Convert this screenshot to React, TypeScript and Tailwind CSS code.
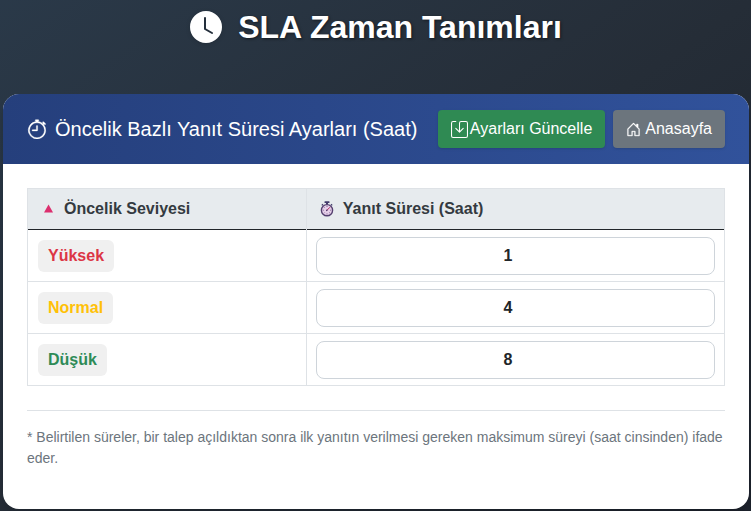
import { BsClockFill, BsHouseDoor, BsSave, BsStopwatch } from 'react-icons/bs'

type Level = { id: string; label: string; hours: number; color: string }

const levels: Level[] = [
  { id: 'high', label: 'Yüksek', hours: 1, color: 'text-[#dc3545]' },
  { id: 'normal', label: 'Normal', hours: 4, color: 'text-[#ffc107]' },
  { id: 'low', label: 'Düşük', hours: 8, color: 'text-[#2e8b57]' },
]

function StopwatchEmoji() {
  return (
    <svg viewBox="0 0 16 16" className="size-4" aria-hidden="true">
      <rect x="5.5" y="0.3" width="5" height="1.8" rx="0.5" fill="#433b6b" />
      <rect x="7" y="1.5" width="2" height="2.5" fill="#433b6b" />
      <path d="M12 3.2l1.2 1.2M4 3.2L2.8 4.4" stroke="#433b6b" strokeWidth="1.3" />
      <circle cx="8" cy="9.2" r="5.6" fill="#e6cfe9" stroke="#54406f" strokeWidth="1.4" />
      <path d="M8 5v1M8 12.4v1M3.8 9.2h1M11.2 9.2h1M5 6.2l.7.7M5 12.2l.7-.7M11 12.2l-.7-.7" stroke="#6b4c83" strokeWidth="0.8" />
      <path d="M7.4 9.8L11 6.2" stroke="#b0285f" strokeWidth="1" />
      <circle cx="7.8" cy="9.4" r="0.8" fill="#54406f" />
    </svg>
  )
}

export default function App() {
  return (
    <main className="min-h-screen bg-linear-to-br from-[#2c3e50] from-[-20%] via-[#252d37] via-50% to-[#1c222c] pt-2 pr-0.5 pb-0.5 pl-[3px] font-['Liberation_Sans',Arial,sans-serif] text-[#212529]">
      <h1 className="mb-12 flex items-center justify-center gap-4 text-[32px]/[38px] font-bold text-white [text-shadow:1px_1px_3px_rgba(0,0,0,0.5)]">
        <BsClockFill className="size-8 drop-shadow-sm" />
        SLA Zaman Tanımları
      </h1>

      <section className="overflow-hidden rounded-2xl bg-white shadow-lg">
        <header className="flex items-center justify-between gap-4 bg-linear-to-r from-[#253f7c] to-[#31529b] px-6 py-4 text-white">
          <h2 className="flex items-center gap-2 text-xl/6">
            <BsStopwatch className="size-5" strokeWidth={0.3} />
            Öncelik Bazlı Yanıt Süresi Ayarları (Saat)
          </h2>
          <div className="flex shrink-0 gap-2">
            <button type="button" className="flex items-center gap-0.5 rounded bg-[#2f8a53] px-[13px] py-[7px] text-base/6 shadow">
              <BsSave className="size-[17px]" />
              Ayarları Güncelle
            </button>
            <a href="#" className="flex items-center gap-1 rounded bg-[#6c757d] px-[13px] py-[7px] text-base/6 shadow">
              <BsHouseDoor className="size-[15px]" strokeWidth={0.3} />
              Anasayfa
            </a>
          </div>
        </header>

        <div className="p-6 pb-10">
          <table className="w-full border-collapse text-left">
            <thead>
              <tr className="border-b border-[#212529] bg-[#e7ebee] text-[#343a40]">
                <th className="w-2/5 border-x border-t border-x-[#dee2e6] border-t-[#dee2e6] px-3 py-2">
                  <span className="flex items-center gap-2">
                    <svg viewBox="0 0 16 16" className="size-4 shrink-0" aria-hidden="true">
                      <path d="M8.5 3.5L13 11.5H4z" fill="#dc2f6e" />
                    </svg>
                    Öncelik Seviyesi
                  </span>
                </th>
                <th className="border-x border-t border-x-[#dee2e6] border-t-[#dee2e6] px-3 py-2">
                  <span className="flex items-center gap-2">
                    <StopwatchEmoji />
                    Yanıt Süresi (Saat)
                  </span>
                </th>
              </tr>
            </thead>
            <tbody>
              {levels.map(({ id, label, hours, color }) => (
                <tr key={id} className="border-b border-[#dee2e6]">
                  <td className="border-x border-[#dee2e6] px-2.5">
                    <label htmlFor={id} className={`inline-block rounded-md bg-[#f0f0f0] px-2.5 py-1 align-middle text-base/6 font-bold ${color}`}>
                      {label}
                    </label>
                  </td>
                  <td className="border-x border-[#dee2e6] px-[9px] pt-[7px] pb-1.5">
                    <input
                      id={id}
                      type="number"
                      min={1}
                      defaultValue={hours}
                      className="block h-[38px] w-full rounded-lg border border-[#ced4da] bg-white px-3 text-center text-base font-bold"
                    />
                  </td>
                </tr>
              ))}
            </tbody>
          </table>

          <hr className="mt-6 mb-4 border-[#dee2e6]" />
          <p className="text-sm/[21px] text-[#6c757d]">
            * Belirtilen süreler, bir talep açıldıktan sonra ilk yanıtın verilmesi gereken maksimum süreyi (saat cinsinden) ifade eder.
          </p>
        </div>
      </section>
    </main>
  )
}
